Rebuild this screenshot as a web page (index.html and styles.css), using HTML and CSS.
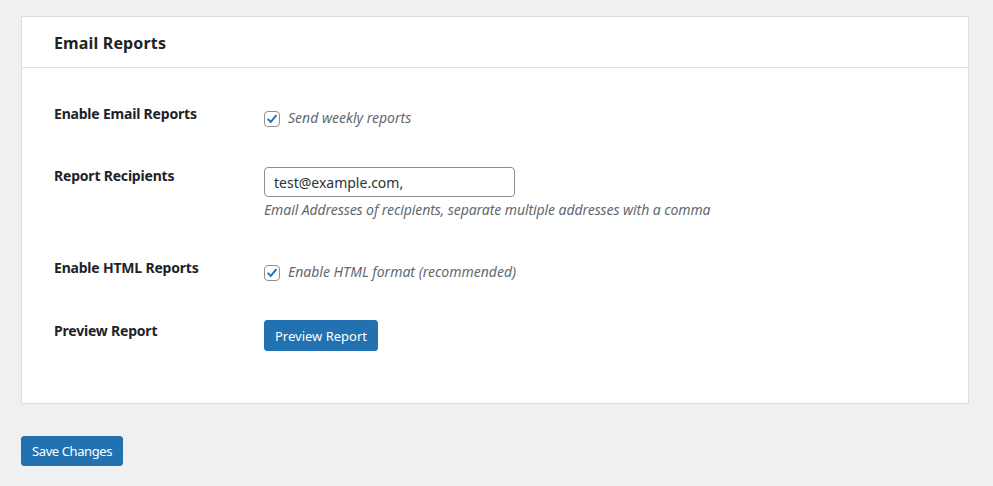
FILE: index.html
```html
<!DOCTYPE html>
<html lang="en">
<head>
<meta charset="utf-8">
<title>Email Reports</title>
<link rel="stylesheet" href="styles.css">
</head>
<body>
<div class="page">
  <div class="card">
    <div class="card-header">
      <h2 class="card-title">Email Reports</h2>
    </div>
    <div class="card-body">
      <div class="row">
        <div class="label">Enable Email Reports</div>
        <div class="field field-check">
          <label class="check">
            <span class="box"><svg viewBox="0 0 16 16" width="16" height="16"><path d="M3.6 8.4 L6.6 11.4 L12.6 4.2" fill="none" stroke="#2271b1" stroke-width="2.2" stroke-linecap="round" stroke-linejoin="round"/></svg></span>
            <span class="check-text">Send weekly reports</span>
          </label>
        </div>
      </div>
      <div class="row">
        <div class="label">Report Recipients</div>
        <div class="field field-input">
          <input class="text-input" type="text" value="test@example.com,">
          <p class="description">Email Addresses of recipients, separate multiple addresses with a comma</p>
        </div>
      </div>
      <div class="row">
        <div class="label">Enable HTML Reports</div>
        <div class="field field-check">
          <label class="check">
            <span class="box"><svg viewBox="0 0 16 16" width="16" height="16"><path d="M3.6 8.4 L6.6 11.4 L12.6 4.2" fill="none" stroke="#2271b1" stroke-width="2.2" stroke-linecap="round" stroke-linejoin="round"/></svg></span>
            <span class="check-text">Enable HTML format (recommended)</span>
          </label>
        </div>
      </div>
      <div class="row">
        <div class="label label-preview">Preview Report</div>
        <div class="field field-button">
          <button class="button" type="button">Preview Report</button>
        </div>
      </div>
    </div>
  </div>
  <div class="submit">
    <button class="button button-save" type="button">Save Changes</button>
  </div>
</div>
</body>
</html>
```
FILE: styles.css
```css
* { box-sizing: border-box; }
html, body { margin: 0; padding: 0; }
body {
  background: #f0f0f1;
  color: #1d2327;
  font-family: "Noto Sans", "Open Sans", sans-serif;
  font-size: 14px;
  line-height: 20px;
}
.page {
  padding: 16px 24px 0 21px;
}
.card {
  background: #fff;
  border: 1px solid #dcdcde;
}
.card-header {
  height: 51px;
  border-bottom: 1px solid #e2e2e4;
  padding: 0 32px;
  display: flex;
  align-items: center;
}
.card-title {
  margin: 0;
  font-size: 16px;
  font-weight: 700;
  line-height: 20px;
  letter-spacing: 0.15px;
  position: relative;
  top: 1px;
}
.card-body {
  padding: 15px 32px 35px;
}
.row {
  display: grid;
  grid-template-columns: 210px 1fr;
  padding-bottom: 17px;
}
.label {
  padding-top: 21px;
  font-weight: 700;
  font-size: 14px;
  letter-spacing: -0.2px;
}
.label-preview { padding-top: 22px; }
.field-check { padding-top: 25px; }
.field-input { padding-top: 22px; }
.field-button { padding-top: 21px; }
.check {
  display: flex;
  align-items: center;
  gap: 8px;
}
.box {
  width: 16px;
  height: 16px;
  border: 1px solid #8c8f94;
  border-radius: 4px;
  display: flex;
  align-items: center;
  justify-content: center;
  background: #fff;
  position: relative;
  top: 1px;
}
.box svg { display: block; }
.check-text, .description {
  font-style: italic;
  color: #646970;
}
.text-input {
  display: block;
  width: 251px;
  height: 30px;
  border: 1px solid #8c8f94;
  border-radius: 4px;
  padding: 0 9px;
  font-family: inherit;
  font-size: 14px;
  color: #2c3338;
  background: #fff;
  margin: 0;
}
.description {
  margin: 3px 0 0;
  line-height: 20px;
  letter-spacing: -0.08px;
}
.button {
  background: #2271b1;
  border: 1px solid #2271b1;
  border-radius: 3px;
  color: #fff;
  font-family: inherit;
  font-size: 13px;
  line-height: 20px;
  height: 31px;
  padding: 0 10px;
  margin: 0;
}
.submit {
  padding-top: 32px;
}
.button-save {
  height: 30px;
  letter-spacing: -0.4px;
}
```
